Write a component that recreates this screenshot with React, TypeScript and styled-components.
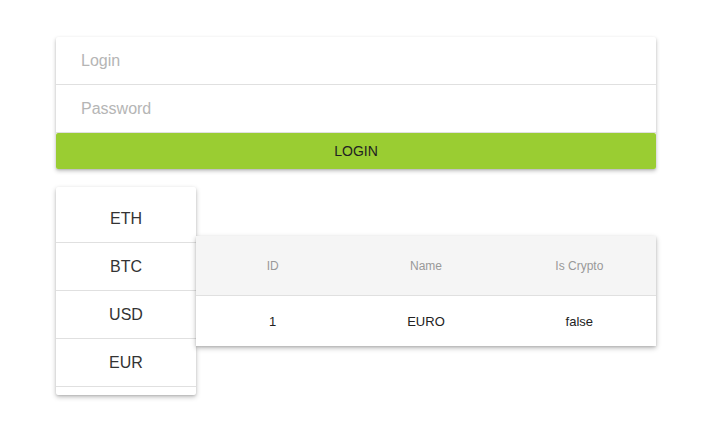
import React from "react";
import styled, { createGlobalStyle } from "styled-components";

const GlobalStyle = createGlobalStyle`
    body {
        margin: 0;
        background: #ffffff;
        font-family: Arial, "Liberation Sans", sans-serif;
    }
`;

const Page = styled.div`
    display: flex;
    flex-direction: column;
    box-sizing: border-box;
    width: 715px;
    min-height: 436px;
    padding: 37px 59px 0 56px;
`;

const LoginCard = styled.form`
    display: flex;
    flex-direction: column;
    background: #ffffff;
    border-radius: 2px;
    box-shadow: 0 2px 4px rgba(0, 0, 0, 0.24), 0 1px 2px rgba(0, 0, 0, 0.1);
`;

const Field = styled.input`
    box-sizing: border-box;
    height: 48px;
    padding: 0 25px;
    border: none;
    border-bottom: 1px solid #e0e0e0;
    outline: none;
    background: transparent;
    font-family: Arial, "Liberation Sans", sans-serif;
    font-size: 16px;
    color: #333;

    &::placeholder {
        color: #b5b5b5;
    }
`;

const LoginButton = styled.button`
    height: 36px;
    border: none;
    border-radius: 2px;
    background: #9acd32;
    font-family: Arial, "Liberation Sans", sans-serif;
    font-size: 14px;
    color: #222;
    cursor: pointer;
`;

const Lower = styled.div`
    display: flex;
    flex-direction: row;
    align-items: flex-start;
    margin-top: 18px;
`;

const Menu = styled.ul`
    display: flex;
    flex-direction: column;
    width: 140px;
    margin: 0;
    padding: 8px 0;
    list-style: none;
    background: #ffffff;
    border-radius: 2px;
    box-shadow: 0 2px 5px rgba(0, 0, 0, 0.26), 0 1px 2px rgba(0, 0, 0, 0.1);
`;

const MenuItem = styled.li`
    display: flex;
    align-items: center;
    justify-content: center;
    height: 47px;
    border-bottom: 1px solid #e0e0e0;
    font-size: 16px;
    color: #333;
`;

const Table = styled.div`
    display: flex;
    flex-direction: column;
    width: 460px;
    margin-top: 49px;
    background: #ffffff;
    box-shadow: 0 2px 5px rgba(0, 0, 0, 0.28), 0 1px 2px rgba(0, 0, 0, 0.1);
`;

const Row = styled.div<{ $head?: boolean }>`
    display: grid;
    grid-template-columns: repeat(3, 1fr);
    align-items: center;
    height: ${p => (p.$head ? "59px" : "50px")};
    background: ${p => (p.$head ? "#f5f5f5" : "#ffffff")};
    border-bottom: ${p => (p.$head ? "1px solid #e0e0e0" : "none")};
`;

const Cell = styled.div<{ $head?: boolean }>`
    text-align: center;
    font-size: ${p => (p.$head ? "12px" : "13px")};
    color: ${p => (p.$head ? "#999" : "#222")};
`;

const currencies = ["ETH", "BTC", "USD", "EUR"];

export default function App() {
    return (
        <>
            <GlobalStyle />
            <Page>
                <LoginCard onSubmit={e => e.preventDefault()}>
                    <Field placeholder="Login" />
                    <Field type="password" placeholder="Password" />
                    <LoginButton type="submit">LOGIN</LoginButton>
                </LoginCard>
                <Lower>
                    <Menu>
                        {currencies.map(c => (
                            <MenuItem key={c}>{c}</MenuItem>
                        ))}
                    </Menu>
                    <Table>
                        <Row $head>
                            <Cell $head>ID</Cell>
                            <Cell $head>Name</Cell>
                            <Cell $head>Is Crypto</Cell>
                        </Row>
                        <Row>
                            <Cell>1</Cell>
                            <Cell>EURO</Cell>
                            <Cell>false</Cell>
                        </Row>
                    </Table>
                </Lower>
            </Page>
        </>
    );
}
